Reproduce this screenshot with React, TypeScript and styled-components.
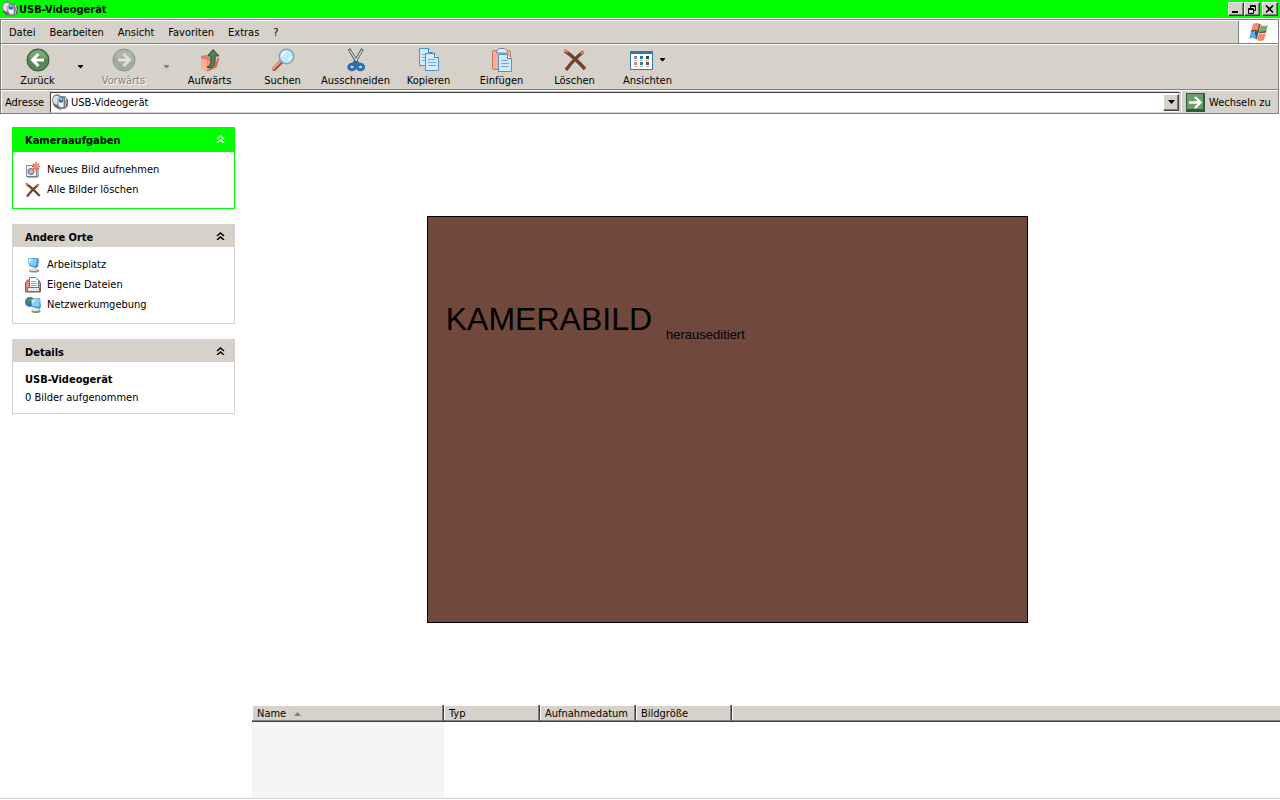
import React from 'react';
import styled, { createGlobalStyle, css } from 'styled-components';

const face = '#d6d2ca';
const shade = '#808080';
const dark = '#404040';
const accent = '#00ff00';

const GlobalStyle = createGlobalStyle`
  * { box-sizing: border-box; }
  body {
    margin: 0;
    background: #fff;
    color: #000;
    font: 11px/16px "DejaVu Sans Condensed", "DejaVu Sans", sans-serif;
  }
  button, input { font: inherit; color: inherit; }
  h1, h2, p, ul { margin: 0; padding: 0; font-size: 11px; }
  svg { display: block; flex: none; }
`;

const Window = styled.div`
  min-height: 100vh;
  display: flex;
  flex-direction: column;
`;

const TitleBar = styled.header`
  height: 18px;
  padding: 0 2px;
  display: flex;
  align-items: center;
  gap: 1px;
  background: ${accent};
`;

const Title = styled.h1`
  flex: 1;
  padding-top: 2px;
  font-weight: bold;
`;

const WindowButton = styled.button<{ $spaced?: boolean }>`
  width: 16px;
  height: 14px;
  padding: 0;
  margin-left: ${p => (p.$spaced ? 2 : 0)}px;
  display: flex;
  align-items: center;
  justify-content: center;
  background: ${face};
  border: 1px solid;
  border-color: #fff ${dark} ${dark} #fff;
  box-shadow: inset -1px -1px ${shade};
`;

const WindowButtons = styled.div`
  display: flex;
`;

const Bars = styled.div`
  margin: 1px 1px 0 0;
  border: 1px solid ${shade};
  background: ${face};
  box-shadow: inset 1px 0 #fff;
`;

const barStyle = css`
  display: flex;
  border-top: 1px solid #fff;
`;

const MenuBar = styled.nav`
  ${barStyle}
  height: 24px;
  border-bottom: 1px solid ${shade};
`;

const MenuItems = styled.div`
  flex: 1;
  display: flex;
  align-items: center;
  gap: 14px;
  padding: 2px 0 0 8px;
  border-right: 1px solid ${shade};
`;

const MenuButton = styled.button`
  padding: 0;
  border: 0;
  background: none;
`;

const FlagCell = styled.div`
  width: 39px;
  display: flex;
  justify-content: center;
  align-items: center;
  background: #fff;
`;

const ToolBar = styled.div`
  ${barStyle}
  height: 46px;
  border-bottom: 1px solid ${shade};
`;

const ToolButton = styled.button`
  width: 73px;
  padding: 3px 0 0;
  border: 0;
  background: none;
  display: flex;
  flex-direction: column;
  align-items: center;
  white-space: nowrap;

  &:disabled {
    color: ${shade};
    text-shadow: 1px 1px #fff;
  }
`;

const DropButton = styled.button`
  width: 13px;
  padding: 0;
  border: 0;
  background: none;
  display: flex;
  align-items: center;
  justify-content: center;
`;

const IconRow = styled.span`
  height: 25px;
  padding-bottom: 1px;
  display: flex;
  align-items: center;
  gap: 5px;
`;

const AddressBar = styled.form`
  ${barStyle}
  height: 23px;
  align-items: center;
`;

const AddressLabel = styled.label`
  width: 49px;
  padding: 2px 0 0 4px;
`;

const AddressField = styled.div`
  flex: 1;
  height: 21px;
  display: flex;
  align-items: center;
  gap: 3px;
  padding-left: 1px;
  background: #fff;
  border: 1px solid;
  border-color: ${dark} ${face} ${face} ${dark};
`;

const AddressInput = styled.input`
  flex: 1;
  min-width: 0;
  padding: 2px 0 0;
  border: 0;
  outline: 0;
  background: none;
`;

const ComboButton = styled(WindowButton)`
  height: 17px;
`;

const GoButton = styled.button`
  width: 97px;
  height: 22px;
  margin-left: 1px;
  padding: 0 0 0 4px;
  display: flex;
  align-items: center;
  gap: 4px;
  border: 0;
  border-left: 1px solid #fff;
  background: none;
  white-space: nowrap;
`;

const GoLabel = styled.span`
  padding-top: 2px;
`;

const Content = styled.div`
  flex: 1;
  display: flex;
  border-bottom: 1px solid ${face};
  margin-bottom: 1px;
`;

const Sidebar = styled.aside`
  width: 252px;
  padding: 13px 17px 13px 12px;
  display: flex;
  flex-direction: column;
  gap: 15px;
`;

const Panel = styled.section<{ $primary?: boolean }>`
  border: 1px solid ${p => (p.$primary ? accent : face)};
  border-top: 0;
`;

const PanelHeader = styled.div<{ $primary?: boolean }>`
  height: ${p => (p.$primary ? 25 : 23)}px;
  margin: 0 -1px;
  padding: ${p => (p.$primary ? 2 : 4)}px 10px 0 13px;
  display: flex;
  align-items: center;
  justify-content: space-between;
  background: ${p => (p.$primary ? accent : face)};
`;

const CollapseButton = styled.button<{ $primary?: boolean }>`
  padding: 0 0 4px;
  border: 0;
  background: none;
  color: ${p => (p.$primary ? '#fff' : '#000')};
`;

const TaskList = styled.ul`
  list-style: none;
  padding: 8px 12px;
`;

const TaskLink = styled.a`
  height: 20px;
  display: flex;
  align-items: center;
  gap: 6px;
  color: inherit;
  text-decoration: none;
`;

const Details = styled.div`
  padding: 9px 12px 6px;
  line-height: 18px;
`;

const Main = styled.main`
  flex: 1;
  min-width: 0;
  display: flex;
  flex-direction: column;
`;

const Stage = styled.div`
  padding: 102px 0 82px 17%;
`;

const Preview = styled.div`
  width: 601px;
  max-width: 100%;
  height: 407px;
  padding: 84px 18px 0;
  display: flex;
  align-items: flex-start;
  gap: 14px;
  background: #70483c;
  border: 1px solid #000;
  font-family: "Liberation Sans", Arial, sans-serif;
`;

const PreviewTitle = styled.p`
  font-size: 32px;
  line-height: 36px;
`;

const PreviewNote = styled.p`
  padding-top: 26px;
  font-size: 13px;
  line-height: 16px;
`;

const ListArea = styled.div`
  flex: 1;
  display: flex;
`;

const FileTable = styled.table`
  width: 100%;
  border-collapse: separate;
  border-spacing: 0;
  table-layout: fixed;
`;

const Column = styled.th<{ $width?: number }>`
  width: ${p => (p.$width ? `${p.$width}px` : 'auto')};
  height: 17px;
  padding: 0 0 0 5px;
  text-align: left;
  font-weight: normal;
  line-height: 14px;
  background: ${face};
  border-bottom: 1px solid ${dark};
  border-right: ${p => (p.$width ? `1px solid ${dark}` : '0')};
  box-shadow: inset ${p => (p.$width ? '-1px' : '0')} -1px ${shade}, inset 1px 1px #fff;
`;

const SortButton = styled.button`
  height: 16px;
  padding: 2px 0 0;
  border: 0;
  background: none;
  display: flex;
  align-items: center;
  gap: 8px;
`;

const ListCell = styled.td<{ $sorted?: boolean }>`
  padding: 0;
  background: ${p => (p.$sorted ? '#f5f5f5' : '#fff')};
`;

const CameraIcon = () => (
  <svg width="16" height="16" viewBox="0 0 16 16">
    <path d="M0 5 2 1l4-1 3 2 4 0 3 4v6l-3 3h-3l-2 1-5-3-3-5z" fill="#85898a" />
    <path d="M1 5 3 2h3l2 2-1 4-3 3-3-3z" fill="#dfe2e2" />
    <path d="M1 9l4 3 2 3-5-3z" fill="#54585a" />
    <path d="M6 5 9 3l3 2v8l-3 1-3-3z" fill="#f4f6f6" stroke="#5f6365" strokeWidth=".7" />
    <circle cx="9" cy="6.500" r="2.200" fill="#2270b5" />
    <path d="M8 5h2v1H8z" fill="#a9e2ff" />
    <path d="M13.500 4q2 4 0 9" stroke="#eceeee" fill="none" />
    <path d="M15 5q1 4-1 8" stroke="#4a4e50" fill="none" />
  </svg>
);

const RoundArrow = ({ forward, muted }: { forward?: boolean; muted?: boolean }) => (
  <svg width="24" height="24" viewBox="0 0 24 24">
    <circle cx="12" cy="12" r="11" fill={muted ? '#a3aaa0' : '#55875a'} stroke={muted ? '#8e968c' : '#2f5a35'} />
    <path d="M3 11a9 9 0 0 1 18 0q-9-5-18 0z" fill={muted ? '#b0b6ac' : '#7aa675'} />
    <path
      d="M18 12H7M12.500 6 6.500 12l6 6"
      transform={forward ? 'rotate(180 12 12)' : undefined}
      fill="none"
      stroke={muted ? '#dfe0da' : '#fff'}
      strokeWidth="3"
    />
  </svg>
);

const UpIcon = () => (
  <svg width="24" height="24" viewBox="0 0 24 24">
    <path d="M3 8l5-1 2 2 11 2-2 8-8 4-8-2z" fill="#e87a64" />
    <path d="M3 10l6 2v11l-6-2z" fill="#ffab96" />
    <path d="M9 14l11-4-3 9-8 4z" fill="#fb9c86" />
    <path d="M9 23l8-4 4-9" fill="none" stroke="#b4604e" />
    <path d="M9 19q4-1 4-5V8H9.500l5.500-6.500L21 8h-4v6q0 5-5 6z" fill="#4f8456" stroke="#274c2e" />
  </svg>
);

const SearchIcon = () => (
  <svg width="24" height="24" viewBox="0 0 24 24">
    <path d="M3 21l7-7" stroke="#8c4435" strokeWidth="4" strokeLinecap="round" />
    <path d="M2 21l8-8" stroke="#f09a80" strokeWidth="2.400" strokeLinecap="round" />
    <circle cx="15.500" cy="8.500" r="7.200" fill="#bfe9fb" stroke="#7da0b4" strokeWidth="1.400" />
    <path d="M11 8a4 4 0 0 1 4-4M18 12l2-3" stroke="#fff" strokeWidth="2" fill="none" />
  </svg>
);

const ScissorsIcon = () => (
  <svg width="24" height="24" viewBox="0 0 24 24">
    <path d="M5 1l9 15M18.500 1 9.500 16" stroke="#4f5c60" strokeWidth="3" />
    <path d="M5.500 2l7 11M18 2l-6 10" stroke="#dfe6e6" strokeWidth="1.200" />
    <path d="M9 14h6l2 3H7z" fill="#2b6eb0" />
    <ellipse cx="8" cy="19" rx="3.200" ry="2.800" fill={face} stroke="#2b6eb0" strokeWidth="3" />
    <ellipse cx="16.500" cy="19" rx="3.200" ry="2.800" fill={face} stroke="#2b6eb0" strokeWidth="3" />
  </svg>
);

const Page = ({ x, y }: { x: number; y: number }) => (
  <g transform={`translate(${x} ${y})`}>
    <path d="M.5.500h9l4 4v13H.500z" fill="#d3ecfa" stroke="#4f93c8" />
    <path d="M9.500.500v4h4" fill="#fff" stroke="#347bb5" />
    <path d="M3 6.500h7M3 9.500h8M3 12.500h8" stroke="#6fa9d6" />
  </g>
);

const CopyIcon = () => (
  <svg width="24" height="24" viewBox="0 0 24 24">
    <Page x={2} y={0} />
    <Page x={8} y={5} />
  </svg>
);

const PasteIcon = () => (
  <svg width="24" height="24" viewBox="0 0 24 24">
    <rect x="2.500" y="2.500" width="18" height="19" rx="2" fill="#ffab96" stroke="#c8705c" />
    <path d="M6.500 5V2.500l3-2h5l3 2V5z" fill="#e6ebef" stroke="#74829a" />
    <Page x={8} y={6} />
  </svg>
);

const DeleteIcon = ({ size }: { size: number }) => (
  <svg width={size} height={size} viewBox="0 0 24 24">
    <path d="M2 3q9 6 20 18" fill="none" stroke="#74402f" strokeWidth="3.400" />
    <path d="M20 4Q10 12 3 22" fill="none" stroke="#74402f" strokeWidth="3.400" />
    <path d="M1 2l4 2M21 3l-3 3" stroke="#f07f66" strokeWidth="2.400" />
  </svg>
);

const ViewsIcon = () => (
  <svg width="24" height="24" viewBox="0 0 24 24">
    <path d="M.5 3.500h22v18H.500z" fill="#fff" stroke="#2d77b8" />
    <path d="M0 3h23v3H0z" fill="#2d77b8" />
    <path d="M4 8h3v3H4z" fill="#8c8790" />
    <path d="M10 8h3v3h-3z" fill="#2f74b0" />
    <path d="M16 8h3v3h-3z" fill="#24552f" />
    <path d="M4 14h3v3H4z" fill="#f47f68" />
    <path d="M10 14h3v3h-3z" fill="#338092" />
    <path d="M16 14h3v3h-3z" fill="#78503a" />
    <path d="M4 12.500h3M10 12.500h3M16 12.500h3M4 18.500h3M10 18.500h3M16 18.500h3" stroke="#b6b6b6" />
  </svg>
);

const FlagIcon = () => (
  <svg width="22" height="20" viewBox="0 0 22 20">
    <path d="M5 2q4-2 7 0l-2 7q-3-2-7 0z" fill="#f08a70" />
    <path d="M13 3q3 2 7 0l-2 7q-4 2-7 0z" fill="#7ba670" />
    <path d="M3 10q3-2 7 0l-2 7q-4-2-7 0z" fill="#57aee6" />
    <path d="M11 11q3 2 7 0l-2 7q-4 2-7 0z" fill="#f08a70" />
    <path d="M12 2 8 17M3 9.500q4-2 7 0t8 0" fill="none" stroke="#70503c" strokeWidth="1.500" />
    <path d="M7 9l3 1-1 5-2-2z" fill="#1f5fa5" />
  </svg>
);

const GoIcon = () => (
  <svg width="19" height="19" viewBox="0 0 19 19">
    <path d="M0 0h19v19H0z" fill="#2f5c39" />
    <path d="M1 1h16v15H1z" fill="#6c9d69" />
    <path d="M3 9.500h11M9 4l5.500 5.500L9 15" fill="none" stroke="#fff" strokeWidth="2.400" />
  </svg>
);

const DownArrow = ({ color = '#000', wide }: { color?: string; wide?: boolean }) => (
  <svg width="7" height="4" viewBox="0 0 7 4">
    <path d={wide ? 'M0 0h7L3.500 4z' : 'M1 0h5v1L3.500 3.500 1 1z'} fill={color} />
  </svg>
);

const Chevrons = () => (
  <svg width="9" height="8" viewBox="0 0 9 8">
    <path d="M1 4l3.500-3L8 4M1 8l3.500-3L8 8" fill="none" stroke="currentColor" strokeWidth="1.500" />
  </svg>
);

const NewPictureIcon = () => (
  <svg width="16" height="16" viewBox="0 0 16 16">
    <path d="M1.500 3.500h10v11h-10z" fill="#f3f5f5" stroke="#7f8c93" />
    <path d="M2 15h11V6" fill="none" stroke="#5d6a70" />
    <circle cx="6" cy="9.500" r="3" fill="#f6a08b" stroke="#3178b8" />
    <path d="M11 0v9M7 4.500h8M8 1.500l6 6M14 1.500l-6 6" stroke="#e0614d" strokeWidth="1.400" />
    <circle cx="11" cy="4.500" r="2.200" fill="#f58f78" />
  </svg>
);

const ComputerIcon = () => (
  <svg width="16" height="16" viewBox="0 0 16 16">
    <ellipse cx="9" cy="13.500" rx="5" ry="2" fill="#878c90" />
    <ellipse cx="8.500" cy="12.500" rx="4" ry="1.500" fill="#dfe2e4" />
    <path d="M3 1l9 0 2 1-1 8-2 1-7-2z" fill="#4a90c6" />
    <path d="M3 1l9 1-1 7-7-1z" fill="#7fcdf4" />
    <path d="M4 2l4 0-4 4z" fill="#c9efff" />
  </svg>
);

const DocumentsIcon = () => (
  <svg width="16" height="16" viewBox="0 0 16 16">
    <path d="M.5 6l2-3h11l2 3v9H.500z" fill="#ee8a74" stroke="#a44f40" />
    <path d="M4.500.500h6l3 3v8h-9z" fill="#fff" stroke="#4885b5" />
    <path d="M6 4.500h5M6 6.500h6M6 8.500h6" stroke="#86a9c2" />
    <path d="M2.500 10.500h12v4h-12z" fill="#dfe9ee" stroke="#59798c" />
  </svg>
);

const NetworkIcon = () => (
  <svg width="16" height="16" viewBox="0 0 16 16">
    <circle cx="5" cy="5" r="5" fill="#2e75b6" />
    <path d="M1 2l4-2 1 3-3 3-2-1z" fill="#4d8a52" />
    <ellipse cx="11" cy="14" rx="4.500" ry="2" fill="#84898d" />
    <ellipse cx="10.500" cy="13" rx="3.500" ry="1.200" fill="#e1e3e5" />
    <path d="M6 2l9-1 1 9-2 2-7-2z" fill="#4a90c6" />
    <path d="M6 2l9 0-1 8-7-1z" fill="#83cff5" />
    <path d="M7 3h4L7 7z" fill="#c9efff" />
  </svg>
);

const tools: [string, React.ReactNode][] = [
  ['Aufwärts', <UpIcon />],
  ['Suchen', <SearchIcon />],
  ['Ausschneiden', <ScissorsIcon />],
  ['Kopieren', <CopyIcon />],
  ['Einfügen', <PasteIcon />],
  ['Löschen', <DeleteIcon size={24} />],
];

type Task = [string, React.ReactNode];

const cameraTasks: Task[] = [
  ['Neues Bild aufnehmen', <NewPictureIcon />],
  ['Alle Bilder löschen', <DeleteIcon size={16} />],
];

const places: Task[] = [
  ['Arbeitsplatz', <ComputerIcon />],
  ['Eigene Dateien', <DocumentsIcon />],
  ['Netzwerkumgebung', <NetworkIcon />],
];

const SidePanel = ({ title, primary, children }: { title: string; primary?: boolean; children: React.ReactNode }) => (
  <Panel $primary={primary}>
    <PanelHeader $primary={primary}>
      <h2>{title}</h2>
      <CollapseButton type="button" $primary={primary} aria-label={`${title} reduzieren`}>
        <Chevrons />
      </CollapseButton>
    </PanelHeader>
    {children}
  </Panel>
);

const Tasks = ({ items }: { items: Task[] }) => (
  <TaskList>
    {items.map(([label, icon]) => (
      <li key={label}>
        <TaskLink href="#">
          {icon}
          {label}
        </TaskLink>
      </li>
    ))}
  </TaskList>
);

export default function App() {
  return (
    <Window>
      <GlobalStyle />
      <TitleBar>
        <CameraIcon />
        <Title>USB-Videogerät</Title>
        <WindowButtons>
          <WindowButton aria-label="Minimieren">
            <svg width="10" height="8"><path d="M1 6h6v2H1z" /></svg>
          </WindowButton>
          <WindowButton aria-label="Verkleinern">
            <svg width="10" height="9" fill="none" stroke="#000">
              <path d="M3.500 3V.500h5v5H7M3 1.500h6M1.500 3.500h5v5h-5zM1 4.500h6" />
            </svg>
          </WindowButton>
          <WindowButton $spaced aria-label="Schließen">
            <svg width="10" height="8"><path d="M1 .5l7 7M8 .500l-7 7" stroke="#000" strokeWidth="1.600" /></svg>
          </WindowButton>
        </WindowButtons>
      </TitleBar>

      <Bars>
        <MenuBar>
          <MenuItems>
            {['Datei', 'Bearbeiten', 'Ansicht', 'Favoriten', 'Extras', '?'].map(item => (
              <MenuButton key={item} type="button">{item}</MenuButton>
            ))}
          </MenuItems>
          <FlagCell><FlagIcon /></FlagCell>
        </MenuBar>

        <ToolBar>
          <ToolButton type="button">
            <IconRow><RoundArrow /></IconRow>
            Zurück
          </ToolButton>
          <DropButton type="button" aria-label="Zurück zu"><DownArrow /></DropButton>
          <ToolButton type="button" disabled>
            <IconRow><RoundArrow forward muted /></IconRow>
            Vorwärts
          </ToolButton>
          <DropButton type="button" disabled aria-label="Vorwärts zu"><DownArrow color={shade} /></DropButton>
          {tools.map(([label, icon]) => (
            <ToolButton key={label} type="button">
              <IconRow>{icon}</IconRow>
              {label}
            </ToolButton>
          ))}
          <ToolButton type="button">
            <IconRow><ViewsIcon /><DownArrow /></IconRow>
            Ansichten
          </ToolButton>
        </ToolBar>

        <AddressBar onSubmit={e => e.preventDefault()}>
          <AddressLabel htmlFor="address">Adresse</AddressLabel>
          <AddressField>
            <CameraIcon />
            <AddressInput id="address" defaultValue="USB-Videogerät" />
            <ComboButton type="button" aria-label="Adressliste öffnen"><DownArrow wide /></ComboButton>
          </AddressField>
          <GoButton type="submit">
            <GoIcon />
            <GoLabel>Wechseln zu</GoLabel>
          </GoButton>
        </AddressBar>
      </Bars>

      <Content>
        <Sidebar>
          <SidePanel title="Kameraaufgaben" primary><Tasks items={cameraTasks} /></SidePanel>
          <SidePanel title="Andere Orte"><Tasks items={places} /></SidePanel>
          <SidePanel title="Details">
            <Details>
              <p><b>USB-Videogerät</b></p>
              <p>0 Bilder aufgenommen</p>
            </Details>
          </SidePanel>
        </Sidebar>

        <Main>
          <Stage>
            <Preview>
              <PreviewTitle>KAMERABILD</PreviewTitle>
              <PreviewNote>herauseditiert</PreviewNote>
            </Preview>
          </Stage>
          <ListArea>
            <FileTable>
              <thead>
                <tr>
                  <Column $width={192} aria-sort="ascending">
                    <SortButton type="button">
                      Name
                      <svg width="7" height="4"><path d="M3.500 0 7 4H0z" fill={shade} /></svg>
                    </SortButton>
                  </Column>
                  <Column $width={96}><SortButton type="button">Typ</SortButton></Column>
                  <Column $width={96}><SortButton type="button">Aufnahmedatum</SortButton></Column>
                  <Column $width={96}><SortButton type="button">Bildgröße</SortButton></Column>
                  <Column as="td" />
                </tr>
              </thead>
              <tbody>
                <tr>
                  <ListCell $sorted />
                  <ListCell colSpan={4} />
                </tr>
              </tbody>
            </FileTable>
          </ListArea>
        </Main>
      </Content>
    </Window>
  );
}
